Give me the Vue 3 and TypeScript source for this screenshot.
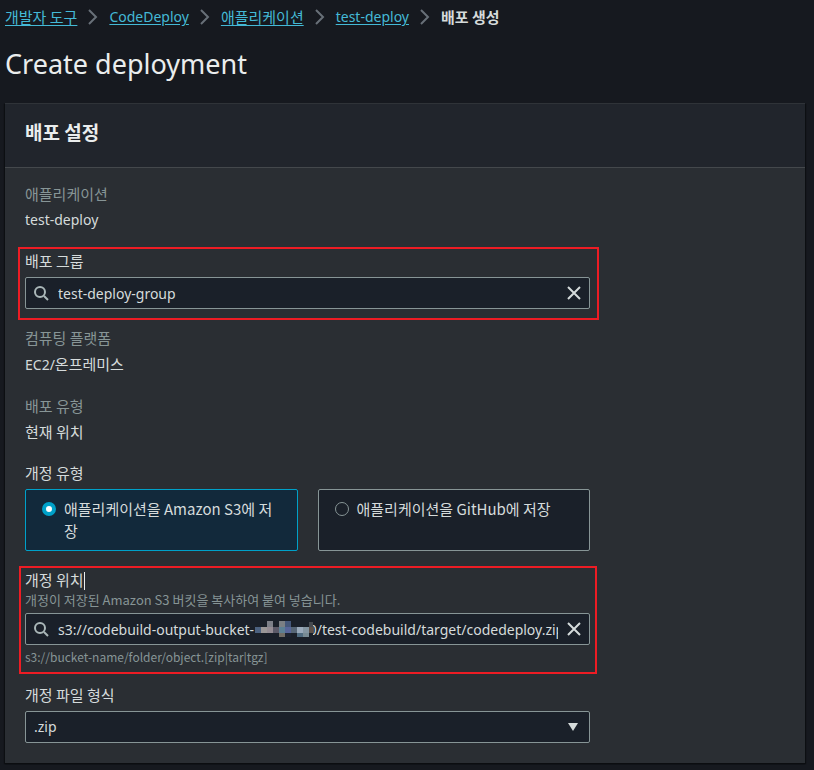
<script setup lang="ts">
import { ref } from 'vue'

interface Tile {
  x: number
  y: number
  w: number
  h: number
  fill: string
}

const crumbs = [
  { label: '개발자 도구', korean: true },
  { label: 'CodeDeploy', korean: false },
  { label: '애플리케이션', korean: true },
  { label: 'test-deploy', korean: false },
]

const group = ref('test-deploy-group')
const location = ref(
  's3://codebuild-output-bucket-' + '\u00a0'.repeat(15) + '0/test-codebuild/target/codedeploy.zip',
)
const revision = ref('s3')
const fileType = ref('.zip')

// Mosaic that hides the account number in the bucket name.
const tiles: Tile[] = [
  { x: 12, y: 0, w: 6, h: 6, fill: '#7d8088' },
  { x: 24, y: 0, w: 6, h: 6, fill: '#7b8084' },
  { x: 30, y: 0, w: 6, h: 6, fill: '#45587a' },
  { x: 0, y: 6, w: 6, h: 6, fill: '#4c6280' },
  { x: 6, y: 6, w: 6, h: 6, fill: '#9a9797' },
  { x: 12, y: 6, w: 6, h: 6, fill: '#948c93' },
  { x: 18, y: 6, w: 6, h: 6, fill: '#5c5a68' },
  { x: 24, y: 6, w: 6, h: 6, fill: '#5c8094' },
  { x: 30, y: 6, w: 6, h: 6, fill: '#58669a' },
  { x: 36, y: 6, w: 6, h: 6, fill: '#566676' },
  { x: 42, y: 6, w: 6, h: 6, fill: '#9aaabb' },
  { x: 48, y: 6, w: 6, h: 6, fill: '#8496a2' },
  { x: 54, y: 1, w: 4, h: 5, fill: '#454a50' },
  { x: 54, y: 6, w: 5, h: 6, fill: '#5c5048' },
  { x: 24, y: 12, w: 6, h: 4, fill: '#716d66' },
  { x: 30, y: 12, w: 6, h: 4, fill: '#1d2430' },
  { x: 42, y: 12, w: 6, h: 4, fill: '#4f6b80' },
  { x: 48, y: 12, w: 6, h: 4, fill: '#788b94' },
  { x: 54, y: 12, w: 4, h: 4, fill: '#1a2029' },
]
</script>

<template>
  <main class="page">
    <nav class="crumbs" aria-label="Breadcrumb">
      <template v-for="c in crumbs" :key="c.label">
        <a href="#" :class="{ ko: c.korean }">{{ c.label }}</a>
        <svg class="chevron" viewBox="0 0 10 16" aria-hidden="true"><path d="M1 1l7 7-7 7" /></svg>
      </template>
      <strong class="ko">배포 생성</strong>
    </nav>

    <h1>Create deployment</h1>

    <section class="panel">
      <header class="panel-head"><h2>배포 설정</h2></header>
      <form class="form" @submit.prevent>
        <div class="field fixed">
          <span class="label ko muted">애플리케이션</span>
          <span class="value">test-deploy</span>
        </div>

        <div class="field marked group">
          <label class="label ko" for="group">배포 그룹</label>
          <div class="box">
            <svg class="search" viewBox="0 0 16 16" aria-hidden="true"><circle cx="6" cy="7" r="5" /><path d="m10 11 4 4" /></svg>
            <input id="group" v-model="group" type="text" />
            <button type="button" aria-label="지우기" @click="group = ''">
              <svg viewBox="0 0 16 16"><path d="m2 2 12 12M14 2 2 14" /></svg>
            </button>
          </div>
        </div>

        <div class="field fixed">
          <span class="label ko muted">컴퓨팅 플랫폼</span>
          <span class="value">EC2/<span class="ko">온프레미스</span></span>
        </div>

        <div class="field fixed">
          <span class="label ko muted">배포 유형</span>
          <span class="value ko">현재 위치</span>
        </div>

        <fieldset class="field">
          <legend class="label ko">개정 유형</legend>
          <div class="choices">
            <label class="choice" :class="{ on: revision === 's3' }">
              <input v-model="revision" type="radio" name="revision" value="s3" />
              <span class="ko">애플리케이션을 Amazon S3에 저장</span>
            </label>
            <label class="choice" :class="{ on: revision === 'github' }">
              <input v-model="revision" type="radio" name="revision" value="github" />
              <span class="ko">애플리케이션을 GitHub에 저장</span>
            </label>
          </div>
        </fieldset>

        <div class="field marked place">
          <label class="label ko" for="location">개정 위치<span class="caret"></span></label>
          <span class="hint">개정이 저장된 Amazon S3 버킷을 복사하여 붙여 넣습니다.</span>
          <div class="box">
            <svg class="search" viewBox="0 0 16 16" aria-hidden="true"><circle cx="6" cy="7" r="5" /><path d="m10 11 4 4" /></svg>
            <input id="location" v-model="location" type="text" />
            <svg class="mosaic" viewBox="0 0 60 16" aria-hidden="true" shape-rendering="crispEdges">
              <rect v-for="t in tiles" :key="`${t.x}-${t.y}`" :x="t.x" :y="t.y" :width="t.w" :height="t.h" :fill="t.fill" />
            </svg>
            <button type="button" aria-label="지우기" @click="location = ''">
              <svg viewBox="0 0 16 16"><path d="m2 2 12 12M14 2 2 14" /></svg>
            </button>
          </div>
          <span class="hint below">s3://bucket-name/folder/object.[zip|tar|tgz]</span>
        </div>

        <div class="field">
          <label class="label ko" for="type">개정 파일 형식</label>
          <div class="box select">
            <select id="type" v-model="fileType">
              <option>.zip</option>
              <option>.tar</option>
              <option>.tgz</option>
            </select>
            <svg class="arrow" viewBox="0 0 12 10" aria-hidden="true"><path d="M1 1h10L6 9z" /></svg>
          </div>
        </div>
      </form>
    </section>
  </main>
</template>

<style>
body {
  margin: 0;
  background: #16191f;
}
</style>

<style scoped>
* {
  box-sizing: border-box;
}
.page {
  min-height: 100vh;
  padding: 6px 9px 7px 5px;
  font: 14px/22px 'Noto Sans', 'Noto Sans CJK KR', sans-serif;
  color: #d5dbdb;
}
.ko {
  font-family: 'Noto Sans CJK KR', sans-serif;
  font-size: 15px;
}
.crumbs {
  display: flex;
  align-items: center;
  gap: 11px;
  height: 22px;
}
.crumbs a {
  color: #44b9d6;
  text-decoration: underline;
  text-underline-offset: 2px;
}
.chevron {
  width: 10px;
  height: 16px;
  flex: none;
  fill: none;
  stroke: #687078;
  stroke-width: 2;
}
h1 {
  margin: 18px 0 21px;
  font-size: 27px;
  line-height: 36px;
  font-weight: 400;
  color: #eaeded;
}
.panel {
  background: #2a2e33;
  border-top: 1px solid #2f3338;
  box-shadow: 0 1px 1px 0 #0b0d10, 1px 1px 1px 0 #0e1014, -1px 1px 1px 0 #0e1014;
}
.panel-head {
  padding: 14px 20px 21px;
  background: #21252c;
  border-bottom: 1px solid #44484c;
}
h2 {
  margin: 0;
  font: 700 19px/28px 'Noto Sans CJK KR', sans-serif;
  color: #eaeded;
}
.form {
  display: flex;
  flex-direction: column;
  gap: 18px;
  width: calc(75% + 5px);
  padding: 15px 20px 20px;
}
.field {
  position: relative;
  display: flex;
  flex-direction: column;
  gap: 5px;
  min-width: 0;
  margin: 0;
  padding: 0;
  border: 0;
}
.fixed {
  gap: 4px;
  padding-bottom: 1px;
}
.label {
  display: block;
  padding: 0;
}
.muted {
  color: #879596;
}
.marked::after {
  content: '';
  position: absolute;
  border: 2px solid #ed1c24;
  pointer-events: none;
}
.group::after {
  inset: -3px -9px -11px -7px;
}
.place::after {
  inset: -3px -7px -8px -6px;
}
.place {
  gap: 0;
}
.place .box {
  margin-top: 4px;
}
.box {
  position: relative;
  display: flex;
  align-items: center;
  height: 32px;
  padding: 0 7px 0 8px;
  background: #1a2029;
  border: 1px solid #879596;
  border-radius: 2px;
}
.search {
  width: 16px;
  height: 16px;
  flex: none;
  fill: none;
  stroke: #aab7b8;
  stroke-width: 2;
}
.box input,
.box select {
  flex: 1;
  min-width: 0;
  height: 30px;
  margin: 0;
  padding: 0;
  border: 0;
  outline: 0;
  background: none;
  color: #d5dbdb;
  font: 14px/22px 'Noto Sans', sans-serif;
  appearance: none;
}
.box input {
  margin: 0 8px;
}
.box button {
  display: flex;
  width: 16px;
  height: 16px;
  padding: 0;
  border: 0;
  background: none;
}
.box button svg {
  width: 16px;
  height: 16px;
  fill: none;
  stroke: #d5dbdb;
  stroke-width: 2;
}
.mosaic {
  position: absolute;
  left: 229px;
  top: 7px;
  width: 60px;
  height: 16px;
  pointer-events: none;
}
.arrow {
  position: absolute;
  right: 10px;
  width: 12px;
  height: 10px;
  fill: #d5dbdb;
  pointer-events: none;
}
.choices {
  display: grid;
  grid-template-columns: 1fr 1fr;
  gap: 20px;
  margin-top: 5px;
}
.choice {
  display: flex;
  align-items: flex-start;
  gap: 8px;
  padding: 8px 20px 8px 16px;
  min-height: 62px;
  background: #1a2029;
  border: 1px solid #879596;
  border-radius: 2px;
  word-break: break-all;
}
.choice.on {
  background: #12293b;
  border-color: #00a1c9;
}
.choice input {
  flex: none;
  width: 14px;
  height: 14px;
  margin: 4px 0 0;
  appearance: none;
  border: 1px solid #879596;
  border-radius: 50%;
}
.choice input:checked {
  border: 4px solid #00a1c9;
  background: #fff;
}
.caret {
  display: inline-block;
  width: 1px;
  height: 18px;
  vertical-align: -4px;
  background: #eaeded;
}
.hint {
  font: 13px/18px 'Noto Sans CJK KR', sans-serif;
  color: #879596;
}
.below {
  margin-top: 3px;
  font-size: 12px;
}
</style>
